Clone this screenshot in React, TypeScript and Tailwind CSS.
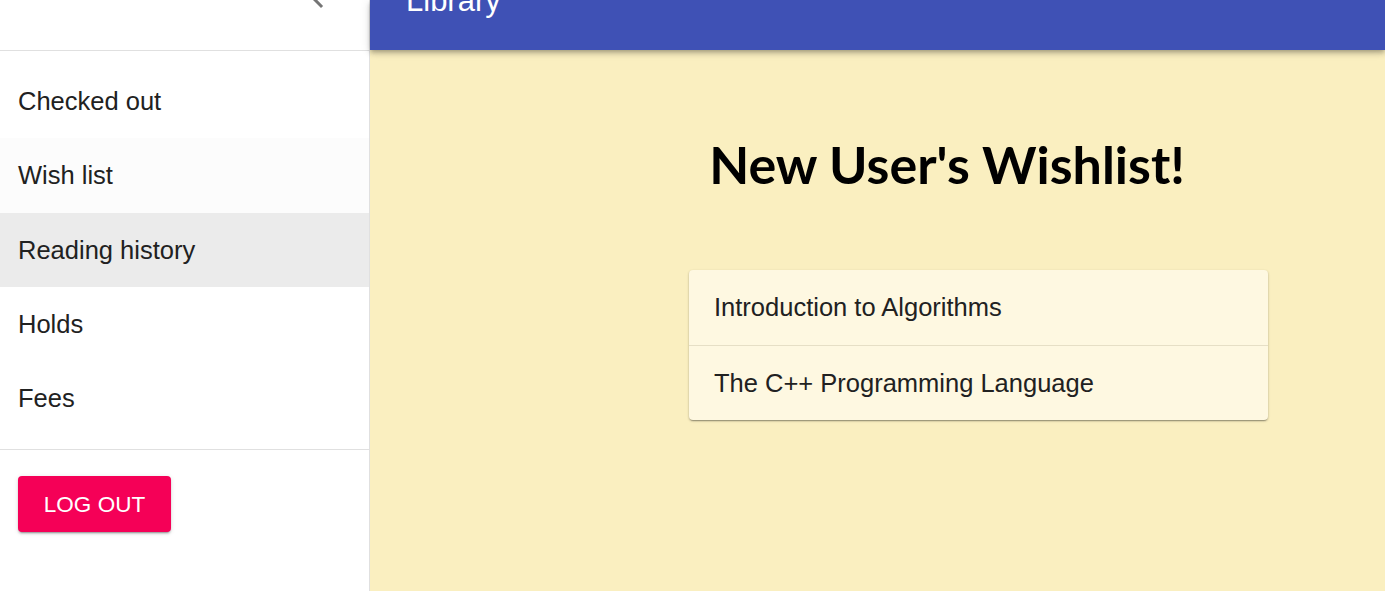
import React from 'react';

const menu = ['Checked out', 'Wish list', 'Reading history', 'Holds', 'Fees'];
const books = ['Introduction to Algorithms', 'The C++ Programming Language'];

export default function App() {
  return (
    <div className="flex h-[591px] w-[1385px] overflow-hidden bg-[#faefc0] text-[#212121] font-['Liberation_Sans',Arial,sans-serif]">
      {/* drawer */}
      <aside className="flex w-[370px] shrink-0 flex-col border-r border-[#e0e0e0] bg-white">
        <div className="h-[51px] shrink-0 overflow-hidden border-b border-[#e0e0e0] pl-[300px]">
          <svg viewBox="0 0 24 24" className="-mt-[19px] h-[36px] w-[36px] fill-[#757575]">
            <path d="M15.41 7.41L14 6l-6 6 6 6 1.41-1.41L10.83 12z" />
          </svg>
        </div>
        <ul className="pt-[13px] pb-[14px]">
          {menu.map((m, i) => (
            <li
              key={m}
              className={`flex h-[74.3px] items-center px-[18px] text-[25.5px] ${
                i === 2 ? 'bg-[#ebebeb]' : i === 1 ? 'bg-[#fcfcfc]' : ''
              }`}
            >
              {m}
            </li>
          ))}
        </ul>
        <div className="border-t border-[#e0e0e0] px-[18px] pt-[26px]">
          <button className="flex h-[56px] w-[153px] items-center justify-center rounded-[4px] bg-[#f50057] text-[22.5px] text-white shadow-[0_3px_1px_-2px_rgba(0,0,0,0.2),0_2px_2px_0_rgba(0,0,0,0.14),0_1px_5px_0_rgba(0,0,0,0.12)]">
            LOG OUT
          </button>
        </div>
      </aside>

      {/* main */}
      <div className="flex min-w-0 flex-1 flex-col">
        <header className="relative z-10 flex h-[50px] shrink-0 items-end bg-[#3f51b5] px-[36px] pb-[34px] text-white shadow-[0_2px_4px_-1px_rgba(0,0,0,0.2),0_4px_5px_0_rgba(0,0,0,0.14),0_1px_10px_0_rgba(0,0,0,0.12)]">
          <span className="text-[31px] leading-none">Library</span>
        </header>
        <main className="flex flex-col pt-[79px]">
          <h1 className="ml-[139px] text-center font-['Lato',sans-serif] text-[52px] font-bold leading-[70px] text-black">
            New User's Wishlist!
          </h1>
          <div className="ml-[319px] mt-[71px] w-[579px] rounded-[4px] bg-[#fef8e1] shadow-[0_2px_1px_-1px_rgba(0,0,0,0.2),0_1px_2px_0_rgba(0,0,0,0.2),0_1px_3px_0_rgba(0,0,0,0.12)]">
            {books.map((b, i) => (
              <div
                key={b}
                className={`flex h-[75px] items-center px-[25px] text-[25.5px] ${
                  i > 0 ? 'border-t border-[#e6dfc6]' : ''
                }`}
              >
                {b}
              </div>
            ))}
          </div>
        </main>
      </div>
    </div>
  );
}
